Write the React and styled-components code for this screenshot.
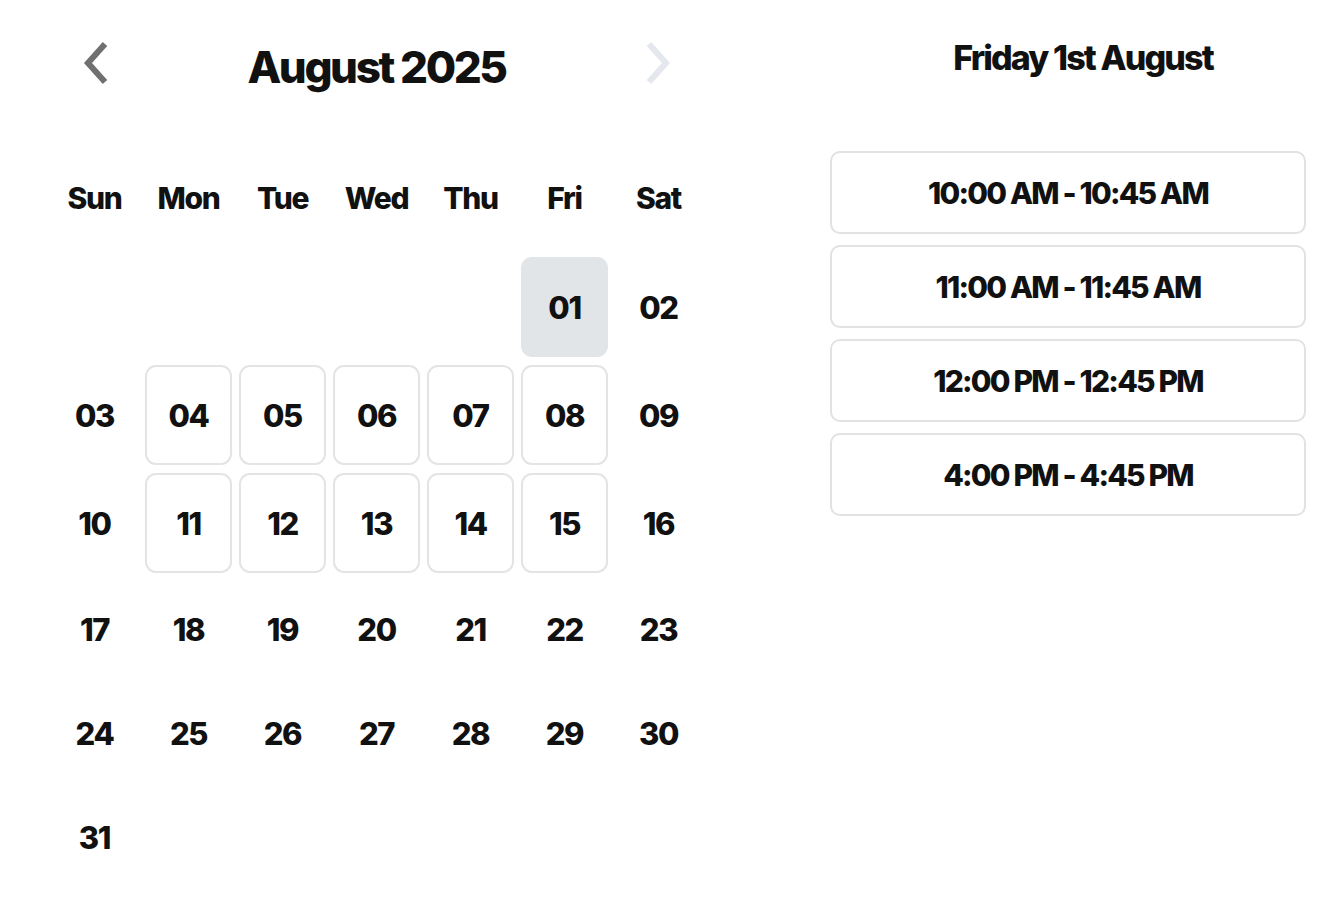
import React from "react";
import styled, { createGlobalStyle } from "styled-components";

const Global = createGlobalStyle`
  html, body { margin: 0; padding: 0; background: #fff; }
  body { font-family: Inter, "Noto Sans", sans-serif; color: #111; }
`;

const Page = styled.div`
  display: flex;
  align-items: flex-start;
  width: 1344px;
  height: 914px;
  box-sizing: border-box;
  padding: 0 38px 0 51px;
`;

const Calendar = styled.section`
  width: 651px;
  display: flex;
  flex-direction: column;
`;

const Header = styled.div`
  display: grid;
  grid-template-columns: 87px 1fr 87px;
  align-items: center;
  height: 134px;
  margin-bottom: 34px;
`;

const NavBtn = styled.button`
  border: none;
  background: none;
  padding: 0;
  margin-top: -9px;
  display: flex;
  justify-content: center;
  align-items: center;
  height: 50px;
  cursor: pointer;
  color: ${(p) => (p.$disabled ? "#e4e7ed" : "#707070")};
`;

const Title = styled.h1`
  margin: 0;
  text-align: center;
  font-size: 44px;
  font-weight: 800;
  letter-spacing: -0.055em;
  color: #111;
  line-height: 1;
`;

const Grid = styled.div`
  display: grid;
  grid-template-columns: repeat(7, 87px);
  column-gap: 7px;
  row-gap: 8px;
`;

const WeekHead = styled.div`
  display: flex;
  justify-content: center;
  align-items: center;
  height: 60px;
  margin-bottom: 21px;
  font-size: 30px;
  font-weight: 800;
  letter-spacing: -0.045em;
  color: #111;
`;

const Day = styled.div`
  box-sizing: border-box;
  display: flex;
  justify-content: center;
  align-items: center;
  height: ${(p) => (p.$tall ? "100px" : "96px")};
  border-radius: 11px;
  font-size: 31px;
  font-weight: 800;
  letter-spacing: -0.045em;
  color: #111;
  border: 2px solid ${(p) => (p.$available ? "#e4e4e4" : "transparent")};
  background: ${(p) => (p.$selected ? "#e2e5e8" : "transparent")};
`;

const Slots = styled.section`
  flex: 1;
  margin-left: 128px;
  display: flex;
  flex-direction: column;
`;

const SlotTitle = styled.h2`
  margin: 0;
  height: 116px;
  padding-top: 41px;
  box-sizing: border-box;
  padding-left: 30px;
  text-align: center;
  font-size: 34px;
  font-weight: 800;
  letter-spacing: -0.055em;
  line-height: 1;
  color: #111;
`;

const SlotList = styled.div`
  display: flex;
  flex-direction: column;
  gap: 11px;
  margin-top: 35px;
`;

const Slot = styled.button`
  box-sizing: border-box;
  height: 83px;
  width: 100%;
  border: 2px solid #e2e2e2;
  border-radius: 10px;
  background: #fff;
  font-family: inherit;
  font-size: 30px;
  font-weight: 800;
  letter-spacing: -0.06em;
  color: #111;
  cursor: pointer;
`;

const Chevron = ({ dir }) => (
  <svg width="30" height="46" viewBox="0 0 30 46" fill="none">
    <path
      d={dir === "left" ? "M25 4 L8 23 L25 42" : "M5 4 L22 23 L5 42"}
      stroke="currentColor"
      strokeWidth="6"
      strokeLinecap="butt"
      strokeLinejoin="miter"
    />
  </svg>
);

const weekdays = ["Sun", "Mon", "Tue", "Wed", "Thu", "Fri", "Sat"];
const available = new Set([4, 5, 6, 7, 8, 11, 12, 13, 14, 15]);
const slots = [
  "10:00 AM - 10:45 AM",
  "11:00 AM - 11:45 AM",
  "12:00 PM - 12:45 PM",
  "4:00 PM - 4:45 PM",
];

export default function App() {
  const firstDay = 5; // Friday
  const cells = [];
  for (let i = 0; i < firstDay; i++) cells.push(null);
  for (let d = 1; d <= 31; d++) cells.push(d);
  const rows = [];
  for (let i = 0; i < cells.length; i += 7) rows.push(cells.slice(i, i + 7));

  return (
    <>
      <Global />
      <Page>
        <Calendar>
          <Header>
            <NavBtn aria-label="Previous month">
              <Chevron dir="left" />
            </NavBtn>
            <Title>August 2025</Title>
            <NavBtn $disabled aria-label="Next month">
              <Chevron dir="right" />
            </NavBtn>
          </Header>
          <Grid>
            {weekdays.map((w) => (
              <WeekHead key={w}>{w}</WeekHead>
            ))}
            {rows.map((row, ri) => {
              const tall = row.some((d) => d && (available.has(d) || d === 1));
              return row.map((d, ci) => (
                <Day
                  key={`${ri}-${ci}`}
                  $tall={tall}
                  $available={d && available.has(d)}
                  $selected={d === 1}
                >
                  {d ? String(d).padStart(2, "0") : ""}
                </Day>
              ));
            })}
          </Grid>
        </Calendar>
        <Slots>
          <SlotTitle>Friday 1st August</SlotTitle>
          <SlotList>
            {slots.map((s) => (
              <Slot key={s}>{s}</Slot>
            ))}
          </SlotList>
        </Slots>
      </Page>
    </>
  );
}
